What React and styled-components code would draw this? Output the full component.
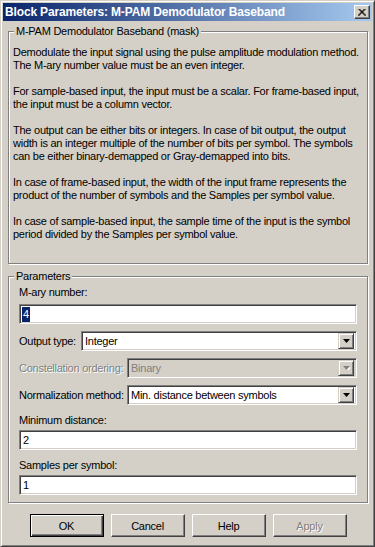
import React from "react";
import styled, { createGlobalStyle } from "styled-components";

const GlobalStyle = createGlobalStyle`
  html, body {
    margin: 0;
    padding: 0;
    background: #d4d0c8;
  }
  body {
    font-family: "Liberation Sans", Arial, sans-serif;
  }
`;

const Window = styled.div`
  box-sizing: border-box;
  width: 375px;
  height: 547px;
  display: flex;
  flex-direction: column;
  padding: 2px;
  background: #d4d0c8;
  border: 1px solid;
  border-color: #d4d0c8 #404040 #404040 #d4d0c8;
  box-shadow: inset 1px 1px 0 #fff, inset -1px -1px 0 #808080;
  font-family: "Liberation Sans", Arial, sans-serif;
  font-size: 11px;
  letter-spacing: -0.25px;
  color: #000;
`;

const TitleBar = styled.div`
  height: 18px;
  display: flex;
  align-items: center;
  justify-content: space-between;
  padding: 0 2px 0 2px;
  background: linear-gradient(to right, #0a246a, #a6caf0);
  color: #fff;
  font-weight: bold;
  font-size: 12px;
  letter-spacing: -0.15px;
  white-space: nowrap;
`;

const CloseButton = styled.div`
  box-sizing: border-box;
  width: 16px;
  height: 14px;
  display: flex;
  align-items: center;
  justify-content: center;
  background: #d4d0c8;
  border: 1px solid;
  border-color: #fff #404040 #404040 #fff;
  box-shadow: inset -1px -1px 0 #808080;
`;

const Body = styled.div`
  flex: 1;
  display: flex;
  flex-direction: column;
  padding: 4px 4px 0 5px;
`;

const Group = styled.fieldset`
  margin: ${(p) => p.$top || 0}px 0 0;
  padding: 0;
  min-width: 0;
  border: 1px solid #808080;
  box-shadow: inset 1px 1px 0 #fff, 1px 1px 0 #fff;
`;

const Legend = styled.legend`
  margin-left: 5px;
  padding: 0 2px;
  line-height: 13px;
  background: #d4d0c8;
`;

const Description = styled.div`
  padding: 8px 4px 22px 4px;
  line-height: 13px;
  white-space: nowrap;
`;

const Para = styled.p`
  margin: 0 0 13px;
  &:last-child {
    margin-bottom: 0;
  }
`;

const Params = styled.div`
  display: flex;
  flex-direction: column;
  padding: 3px 10px 7px 10px;
`;

const Label = styled.div`
  line-height: 13px;
  margin-top: ${(p) => p.$top || 0}px;
  color: ${(p) => (p.$disabled ? "#808080" : "#000")};
  text-shadow: ${(p) => (p.$disabled ? "1px 1px 0 #fff" : "none")};
  white-space: nowrap;
`;

const Sunken = styled.div`
  box-sizing: border-box;
  height: 20px;
  display: flex;
  align-items: center;
  margin-top: ${(p) => p.$top || 0}px;
  padding: 0 2px 0 3px;
  background: ${(p) => (p.$disabled ? "#d4d0c8" : "#fff")};
  border: 1px solid;
  border-color: #808080 #fff #fff #808080;
  box-shadow: inset 1px 1px 0 #404040, inset -1px -1px 0 #d4d0c8;
`;

const Selected = styled.span`
  background: #0a246a;
  color: #fff;
  line-height: 15px;
  padding: 0 1px;
  margin-left: -1px;
`;

const Row = styled.div`
  display: flex;
  align-items: center;
  margin-top: ${(p) => p.$top || 0}px;
`;

const RowLabel = styled(Label)`
  width: ${(p) => p.$width}px;
  flex: none;
`;

const Combo = styled(Sunken)`
  flex: 1;
  padding: 0 2px 0 3px;
  justify-content: space-between;
  color: ${(p) => (p.$disabled ? "#808080" : "#000")};
`;

const DropButton = styled.div`
  box-sizing: border-box;
  width: 16px;
  height: 16px;
  display: flex;
  align-items: center;
  justify-content: center;
  background: #d4d0c8;
  border: 1px solid;
  border-color: #d4d0c8 #404040 #404040 #d4d0c8;
  box-shadow: inset 1px 1px 0 #fff, inset -1px -1px 0 #808080;
`;

const Buttons = styled.div`
  display: flex;
  justify-content: center;
  gap: 7px;
  margin-top: 11px;
`;

const Button = styled.div`
  box-sizing: border-box;
  width: 74px;
  height: 23px;
  display: flex;
  align-items: center;
  justify-content: center;
  background: #d4d0c8;
  border: 1px solid;
  border-color: ${(p) => (p.$default ? "#000" : "#fff #404040 #404040 #fff")};
  box-shadow: ${(p) =>
    p.$default
      ? "inset 1px 1px 0 #fff, inset -1px -1px 0 #404040, inset -2px -2px 0 #808080"
      : "inset -1px -1px 0 #808080"};
  color: ${(p) => (p.$disabled ? "#808080" : "#000")};
  text-shadow: ${(p) => (p.$disabled ? "1px 1px 0 #fff" : "none")};
`;

const Arrow = ({ disabled }) => (
  <svg width="7" height="4" viewBox="0 0 7 4">
    {disabled && <polygon points="1,1 8,1 4.5,5" fill="#fff" />}
    <polygon points="0,0 7,0 3.5,4" fill={disabled ? "#808080" : "#000"} />
  </svg>
);

const CloseGlyph = () => (
  <svg width="8" height="7" viewBox="0 0 8 7">
    <path d="M0.5 0 L7.5 7 M1.5 0 L8 6.5 M7.5 0 L0.5 7 M6.5 0 L0 6.5" stroke="#000" strokeWidth="1" />
  </svg>
);

const Select = ({ value, disabled, top, labelWidth, label }) => (
  <Row $top={top}>
    <RowLabel $width={labelWidth} $disabled={disabled}>
      {label}
    </RowLabel>
    <Combo $disabled={disabled}>
      <span>{value}</span>
      <DropButton>
        <Arrow disabled={disabled} />
      </DropButton>
    </Combo>
  </Row>
);

export default function App() {
  return (
    <>
      <GlobalStyle />
      <Window>
        <TitleBar>
          <span>Block Parameters: M-PAM Demodulator Baseband</span>
          <CloseButton>
            <CloseGlyph />
          </CloseButton>
        </TitleBar>
        <Body>
          <Group>
            <Legend>M-PAM Demodulator Baseband (mask)</Legend>
            <Description>
              <Para>
                Demodulate the input signal using the pulse amplitude modulation method.
                <br />
                The M-ary number value must be an even integer.
              </Para>
              <Para>
                For sample-based input, the input must be a scalar. For frame-based input,
                <br />
                the input must be a column vector.
              </Para>
              <Para>
                The output can be either bits or integers. In case of bit output, the output
                <br />
                width is an integer multiple of the number of bits per symbol. The symbols
                <br />
                can be either binary-demapped or Gray-demapped into bits.
              </Para>
              <Para>
                In case of frame-based input, the width of the input frame represents the
                <br />
                product of the number of symbols and the Samples per symbol value.
              </Para>
              <Para>
                In case of sample-based input, the sample time of the input is the symbol
                <br />
                period divided by the Samples per symbol value.
              </Para>
            </Description>
          </Group>
          <Group $top={6}>
            <Legend>Parameters</Legend>
            <Params>
              <Label>M-ary number:</Label>
              <Sunken $top={5}>
                <Selected>4</Selected>
              </Sunken>
              <Select top={7} labelWidth={62} label="Output type:" value="Integer" />
              <Select
                top={7}
                labelWidth={108}
                label="Constellation ordering:"
                value="Binary"
                disabled
              />
              <Select
                top={7}
                labelWidth={108}
                label="Normalization method:"
                value="Min. distance between symbols"
              />
              <Label $top={9}>Minimum distance:</Label>
              <Sunken $top={3}>2</Sunken>
              <Label $top={9}>Samples per symbol:</Label>
              <Sunken $top={3}>1</Sunken>
            </Params>
          </Group>
          <Buttons>
            <Button $default>OK</Button>
            <Button>Cancel</Button>
            <Button>Help</Button>
            <Button $disabled>Apply</Button>
          </Buttons>
        </Body>
      </Window>
    </>
  );
}
